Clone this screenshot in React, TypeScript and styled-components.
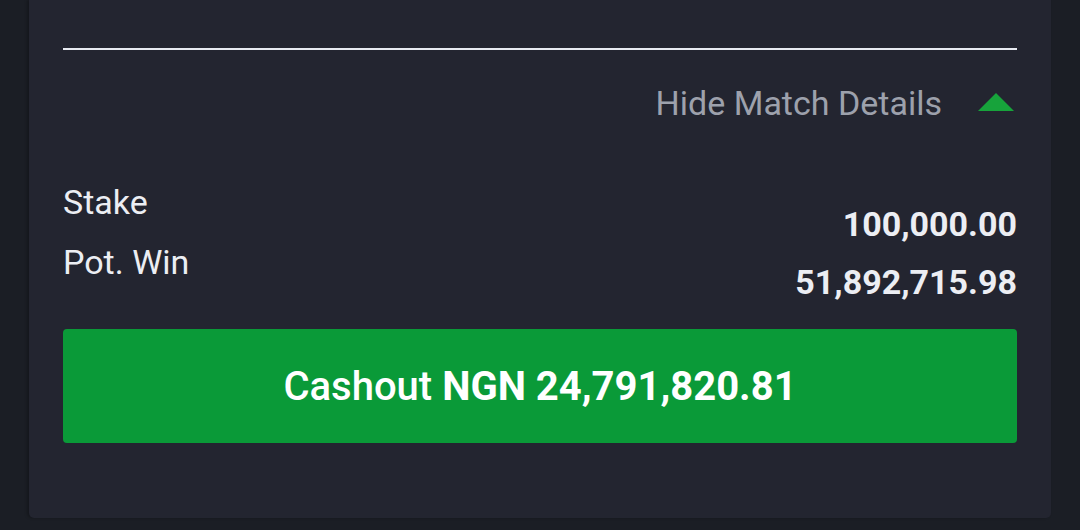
import React from "react";
import styled, { createGlobalStyle } from "styled-components";

const Global = createGlobalStyle`
  html, body {
    margin: 0;
    padding: 0;
    background: #1b1e25;
    font-family: Roboto, "Noto Sans", "Liberation Sans", sans-serif;
  }
  * { box-sizing: border-box; }
`;

const Page = styled.div`
  width: 1080px;
  height: 530px;
  padding: 0 29px 12px 29px;
  background: #1b1e25;
  overflow: hidden;
`;

const Card = styled.section`
  background: #232530;
  border-radius: 0 0 5px 5px;
  padding: 48px 34px 75px 34px;
  box-shadow: -2px 0 3px rgba(0, 0, 0, 0.25);
`;

const Divider = styled.div`
  height: 2px;
  background: #e8eaf1;
`;

const DetailsToggle = styled.div`
  margin-top: 33px;
  display: flex;
  align-items: center;
  justify-content: flex-end;
  gap: 36px;
  padding-right: 3px;
`;

const ToggleText = styled.span`
  font-size: 34px;
  line-height: 40px;
  color: #9da1ac;
`;

const Triangle = styled.svg`
  width: 36px;
  height: 18px;
  display: block;
  margin-top: -2px;
`;

const Summary = styled.div`
  margin-top: 49px;
  display: flex;
  justify-content: space-between;
`;

const Labels = styled.div`
  display: flex;
  flex-direction: column;
`;

const Label = styled.span`
  font-size: 34px;
  line-height: 60px;
  color: #eceef3;
`;

const Values = styled.div`
  display: flex;
  flex-direction: column;
  align-items: flex-end;
  padding-top: 23px;
`;

const Value = styled.span`
  font-size: 34px;
  font-weight: 700;
  line-height: 58px;
  color: #eceef3;
`;

const CashoutButton = styled.button`
  margin-top: 18px;
  width: 100%;
  height: 114px;
  border: none;
  border-radius: 4px;
  background: #0a9a38;
  color: #ffffff;
  font-family: Roboto, "Noto Sans", "Liberation Sans", sans-serif;
  font-size: 40px;
  font-weight: 500;
  display: flex;
  align-items: center;
  justify-content: center;
  gap: 0.25em;
  padding: 0;
`;

const Amount = styled.span`
  font-weight: 700;
`;

export default function App() {
  return (
    <>
      <Global />
      <Page>
        <Card>
          <Divider />
          <DetailsToggle>
            <ToggleText>Hide Match Details</ToggleText>
            <Triangle viewBox="0 0 36 18">
              <polygon points="18,0 36,18 0,18" fill="#17a33b" />
            </Triangle>
          </DetailsToggle>
          <Summary>
            <Labels>
              <Label>Stake</Label>
              <Label>Pot. Win</Label>
            </Labels>
            <Values>
              <Value>100,000.00</Value>
              <Value>51,892,715.98</Value>
            </Values>
          </Summary>
          <CashoutButton>
            <span>Cashout</span>
            <Amount>NGN 24,791,820.81</Amount>
          </CashoutButton>
        </Card>
      </Page>
    </>
  );
}
